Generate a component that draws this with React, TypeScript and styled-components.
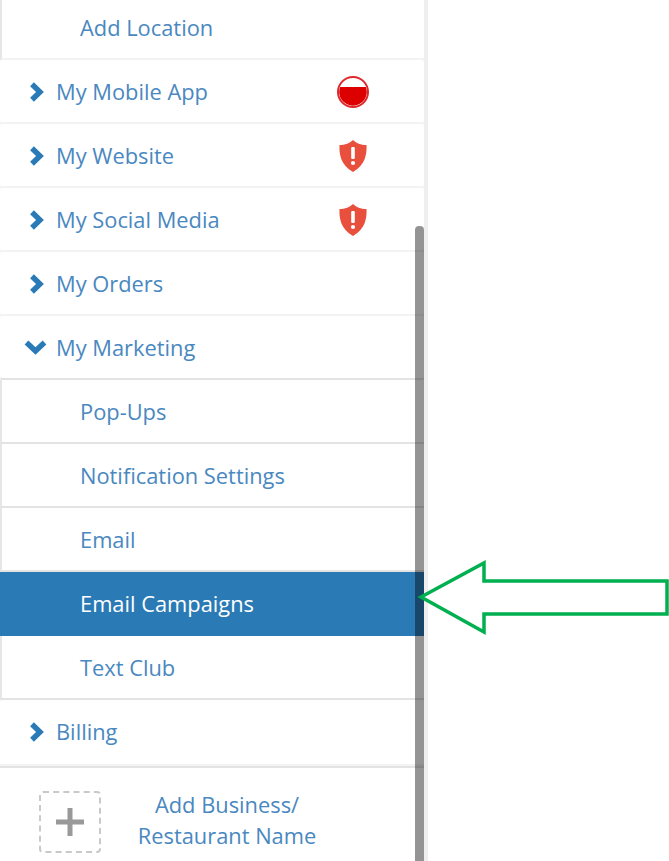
import React from "react";
import styled, { createGlobalStyle } from "styled-components";

const GlobalStyle = createGlobalStyle`
  html, body {
    margin: 0;
    height: 861px;
    overflow: hidden;
    background: #fff;
    font-family: "Open Sans", "Liberation Sans", sans-serif;
  }
`;

const Page = styled.div`
  position: relative;
  width: 669px;
  height: 861px;
  overflow: hidden;
`;

const Sidebar = styled.nav`
  width: 424px;
  height: 861px;
  border-right: 4px solid #efefef;
  display: flex;
  flex-direction: column;
  background: #f5f5f5;
`;

const Row = styled.div<{ $h?: number; $active?: boolean; $sub?: boolean; $open?: boolean; $light?: boolean }>`
  box-sizing: border-box;
  flex: none;
  height: ${(p) => p.$h ?? 64}px;
  display: flex;
  align-items: center;
  padding-left: ${(p) => (p.$sub ? 79 : 0)}px;
  padding-bottom: ${(p) => (p.$light ? 4 : p.$h === 66 ? 2 : 0)}px;
  font-size: 21.85px;
  color: ${(p) => (p.$active ? "#fff" : "#4a88c0")};
  background: ${(p) => (p.$active ? "#2a7ab5" : "#fff")};
  border-left: ${(p) => (p.$sub ? `2px solid ${p.$active ? "#2a7ab5" : "#e6e6e6"}` : "0")};
  border-bottom: 2px solid
    ${(p) => (p.$active ? "#2a7ab5" : (p.$sub && !p.$light) || p.$open ? "#e3e3e3" : "#f3f3f3")};
  border-radius: ${(p) => (p.$sub ? "0" : "3px")};
`;

const ChevronBox = styled.span<{ $down?: boolean }>`
  width: 57px;
  flex: none;
  display: flex;
  padding-left: ${(p) => (p.$down ? 23 : 28)}px;
  margin-top: ${(p) => (p.$down ? 0 : 2)}px;
  box-sizing: border-box;
`;

const Label = styled.span`
  flex: 1;
  margin-left: -1px;
`;

const Status = styled.span`
  width: 58px;
  margin-right: 42px;
  margin-top: 2px;
  flex: none;
  display: flex;
  justify-content: center;
`;

const AddRow = styled.div`
  flex: 1;
  display: flex;
  align-items: flex-start;
  border-top: 2px solid #e3e3e3;
  padding: 23px 0 0 39px;
  background: #fff;
`;

const PlusBox = styled.div`
  box-sizing: border-box;
  width: 62px;
  height: 62px;
  flex: none;
  border: 2px dashed #c9c9c9;
  border-radius: 4px;
  display: flex;
  align-items: center;
  justify-content: center;
`;

const AddLabel = styled.div`
  width: 250px;
  margin: -2px 0 0 1px;
  text-align: center;
  font-size: 21.85px;
  line-height: 31px;
  color: #4a88c0;
`;

const Thumb = styled.div`
  position: absolute;
  left: 415px;
  top: 226px;
  bottom: 0;
  width: 9px;
  border-radius: 4px 4px 0 0;
  background: rgba(0, 0, 0, 0.42);
`;

const ArrowSvg = styled.svg`
  position: absolute;
  left: 415px;
  top: 558px;
`;

const ChevronRight = () => (
  <svg width="17" height="20" viewBox="0 0 17 20">
    <path d="M4 2.2 L12 10 L4 17.8" fill="none" stroke="#2a7ab5" strokeWidth="5.4" />
  </svg>
);

const ChevronDown = () => (
  <svg width="25" height="16" viewBox="0 0 25 16">
    <path d="M3.5 3.5 L12.5 12 L21.5 3.5" fill="none" stroke="#2a7ab5" strokeWidth="5.4" />
  </svg>
);

const HalfCircle = () => (
  <svg width="32" height="32" viewBox="0 0 32 32">
    <circle cx="16" cy="16" r="15" fill="#fff" stroke="#e0272b" strokeWidth="2" />
    <path d="M3.1 11 H28.9 A13.8 13.8 0 1 1 3.1 11 Z" fill="#dc0000" />
  </svg>
);

const Shield = () => (
  <svg width="28" height="32" viewBox="0 0 28 32">
    <path d="M14 0 C17 3 22 5 27.5 5 C28 15 26 25 14 32 C2 25 0 15 0.5 5 C6 5 11 3 14 0 Z" fill="#e94f3d" />
    <rect x="12.2" y="7" width="3.6" height="12" rx="1.2" fill="#fff" />
    <circle cx="14" cy="23" r="2.1" fill="#fff" />
  </svg>
);

const Plus = () => (
  <svg width="28" height="28" viewBox="0 0 28 28">
    <path d="M14 0 V28 M0 14 H28" stroke="#999" strokeWidth="5" />
  </svg>
);

type Item = { label: string; status?: "half" | "shield" };

const topItems: Item[] = [
  { label: "My Mobile App", status: "half" },
  { label: "My Website", status: "shield" },
  { label: "My Social Media", status: "shield" },
  { label: "My Orders" },
];

const subItems = ["Pop-Ups", "Notification Settings", "Email", "Email Campaigns", "Text Club"];

export default function App() {
  return (
    <Page>
      <GlobalStyle />
      <Sidebar>
        <Row $h={60} $sub $light>
          <Label>Add Location</Label>
        </Row>
        {topItems.map((item) => (
          <Row key={item.label}>
            <ChevronBox>
              <ChevronRight />
            </ChevronBox>
            <Label>{item.label}</Label>
            {item.status && <Status>{item.status === "half" ? <HalfCircle /> : <Shield />}</Status>}
          </Row>
        ))}
        <Row $open>
          <ChevronBox $down>
            <ChevronDown />
          </ChevronBox>
          <Label>My Marketing</Label>
        </Row>
        {subItems.map((label) => (
          <Row key={label} $sub $active={label === "Email Campaigns"}>
            <Label>{label}</Label>
          </Row>
        ))}
        <Row $h={66}>
          <ChevronBox>
            <ChevronRight />
          </ChevronBox>
          <Label>Billing</Label>
        </Row>
        <AddRow>
          <PlusBox>
            <Plus />
          </PlusBox>
          <AddLabel>
            Add Business/
            <br />
            Restaurant Name
          </AddLabel>
        </AddRow>
      </Sidebar>
      <Thumb />
      <ArrowSvg width="254" height="80" viewBox="0 0 254 80">
        <path d="M6 39 L69 5 V23 H252 V56 H69 V74 Z" fill="#fff" stroke="#00b050" strokeWidth="3.5" />
      </ArrowSvg>
    </Page>
  );
}
